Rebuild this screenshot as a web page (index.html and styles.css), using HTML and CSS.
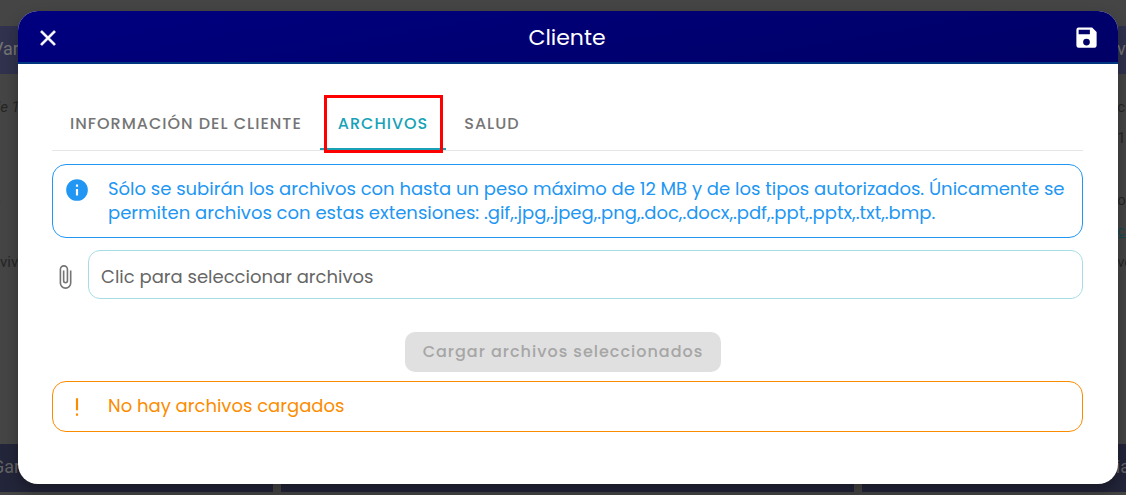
FILE: index.html
```
<!DOCTYPE html>
<html lang="es">
<head>
    <meta charset="UTF-8">
    <meta name="viewport" content="width=device-width, initial-scale=1.0">
    <title>Cliente</title>
    <link rel="stylesheet" href="styles.css">
</head>
<body>
    <div class="board">
        <div class="board-row board-row-top">
            <span class="cell">Var</span>
            <span class="cell"></span>
            <span class="cell cell-end">vi</span>
        </div>
        <div class="board-content">
            <div class="board-notes">
                <p><em>de 1</em></p>
                <p></p>
                <p></p>
                <p>o</p>
                <p></p>
                <p class="indent">viv</p>
            </div>
            <div class="board-notes">
                <p>ci</p>
                <p>16</p>
                <p></p>
                <p>or</p>
                <p><a href="#">cl</a></p>
                <p>vo</p>
            </div>
        </div>
        <div class="board-row">
            <span class="cell">Gar</span>
            <span class="cell"></span>
            <span class="cell cell-end">ia</span>
        </div>
    </div>

    <div class="overlay">
        <div class="dialog" role="dialog" aria-labelledby="dialog-title">
            <div class="dialog-header">
                <button type="button" class="icon-button" aria-label="Cerrar">
                    <svg class="icon-close" viewBox="0 0 24 24" width="26" height="26"><path d="M19 6.41L17.59 5 12 10.59 6.41 5 5 6.41 10.59 12 5 17.59 6.41 19 12 13.41 17.59 19 19 17.59 13.41 12z"/></svg>
                </button>
                <h1 id="dialog-title">Cliente</h1>
                <button type="button" class="icon-button" aria-label="Guardar">
                    <svg viewBox="0 0 24 24" width="27" height="27"><path d="M15 9H5V5h10m-3 14a3 3 0 0 1-3-3 3 3 0 0 1 3-3 3 3 0 0 1 3 3 3 3 0 0 1-3 3m5-16H5a2 2 0 0 0-2 2v14a2 2 0 0 0 2 2h14a2 2 0 0 0 2-2V7z"/></svg>
                </button>
            </div>
            <div class="dialog-body">
                <div class="tabs" role="tablist">
                    <button type="button" class="tab" role="tab">INFORMACIÓN DEL CLIENTE</button>
                    <button type="button" class="tab tab-active" role="tab" aria-selected="true">ARCHIVOS<span class="marker"></span></button>
                    <button type="button" class="tab" role="tab">SALUD</button>
                </div>
                <div class="alert alert-info">
                    <svg viewBox="0 0 24 24" width="26" height="26"><path d="M13 9h-2V7h2m0 10h-2v-6h2m-1-9A10 10 0 0 0 2 12a10 10 0 0 0 10 10 10 10 0 0 0 10-10A10 10 0 0 0 12 2z"/></svg>
                    <p>Sólo se subirán los archivos con hasta un peso máximo de 12 MB y de los tipos autorizados. Únicamente se permiten archivos con estas extensiones: .gif,.jpg,.jpeg,.png,.doc,.docx,.pdf,.ppt,.pptx,.txt,.bmp.</p>
                </div>
                <div class="file-row">
                    <svg viewBox="0 0 24 24" width="26" height="26"><path d="M16.5 6v11.5a4 4 0 0 1-4 4 4 4 0 0 1-4-4V5A2.5 2.5 0 0 1 11 2.5 2.5 2.5 0 0 1 13.5 5v10.5a1 1 0 0 1-1 1 1 1 0 0 1-1-1V6H10v9.5a2.5 2.5 0 0 0 2.5 2.5 2.5 2.5 0 0 0 2.5-2.5V5a4 4 0 0 0-4-4 4 4 0 0 0-4 4v12.5a5.5 5.5 0 0 0 5.5 5.5 5.5 5.5 0 0 0 5.5-5.5V6z"/></svg>
                    <input type="text" class="file-input" placeholder="Clic para seleccionar archivos" aria-label="Clic para seleccionar archivos" readonly>
                </div>
                <button type="button" class="upload-button" disabled>Cargar archivos seleccionados</button>
                <div class="alert alert-warning">
                    <svg viewBox="0 0 24 24" width="26" height="26"><path d="M11 4h2v11h-2zM11 18h2v2h-2z"/></svg>
                    <p>No hay archivos cargados</p>
                </div>
            </div>
        </div>
    </div>
</body>
</html>
```
FILE: styles.css
```
* {
    box-sizing: border-box;
}
body {
    margin: 0;
    min-height: 100vh;
    overflow: hidden;
    background-color: #454545;
    font-family: Poppins, Inter, "Open Sans", sans-serif;
    color: #666;
}
h1, p {
    margin: 0;
    font-weight: 400;
}
button, input {
    font-family: inherit;
}
svg {
    display: block;
    flex: none;
    fill: currentColor;
}

/* page behind the dialog */
.board {
    position: absolute;
    inset: 0 -8px;
    display: flex;
    flex-direction: column;
    padding: 26px 0 3px;
    font-family: Roboto, sans-serif;
    font-size: 15px;
    color: #262626;
}
.board-row {
    display: grid;
    grid-template-columns: 281px 1fr 272px;
    gap: 8px;
}
.cell {
    height: 48px;
    line-height: 46px;
    background-color: #23253a;
    color: #636363;
    font-size: 18px;
}
.board-row-top .cell {
    background-color: #30324e;
    color: #747474;
}
.cell-end {
    padding-right: 4px;
    text-align: right;
}
.board-content {
    flex: 1;
    display: flex;
    justify-content: space-between;
    padding-top: 18px;
}
.board-notes p {
    height: 31px;
    line-height: 31px;
}
.board-notes .indent {
    padding-left: 8px;
}
.board-notes a {
    color: #164a52;
}

/* dialog */
.overlay {
    position: relative;
    padding: 11px 8px 11px 18px;
}
.dialog {
    border-radius: 20px;
    overflow: hidden;
    background-color: #fff;
    box-shadow: 0 8px 16px rgba(0, 0, 0, 0.3);
}
.dialog-header {
    display: flex;
    align-items: center;
    justify-content: space-between;
    height: 53px;
    padding: 2px 18px 0 17px;
    background: linear-gradient(170deg, #000080, #000066);
    border-bottom: 2px solid #003580;
    color: #fff;
}
.dialog-header h1 {
    font-size: 22px;
    line-height: 32px;
}
.icon-button {
    display: flex;
    padding: 0;
    border: 0;
    background: none;
    color: inherit;
    cursor: pointer;
}
.icon-close path {
    stroke: currentColor;
    stroke-width: 0.5;
}
.dialog-body {
    display: flex;
    flex-direction: column;
    padding: 32px 35px 52px 34px;
}
.tabs {
    display: flex;
    height: 55px;
    margin-bottom: 13px;
    border-bottom: 1px solid #e6e6e6;
}
.tab {
    position: relative;
    padding: 2px 18px 0;
    border: 0;
    border-bottom: 2px solid transparent;
    background: none;
    color: #757575;
    font-size: 16px;
    font-weight: 500;
    letter-spacing: 1px;
    cursor: pointer;
}
.tab-active {
    border-bottom-color: #17a2b8;
    color: #17a2b8;
}
.marker {
    position: absolute;
    inset: -1px 3px -5px 4px;
    border: 3px solid #f00;
}
.alert {
    display: flex;
    gap: 18px;
    padding: 12px 12px 11px 11px;
    border: 1px solid currentColor;
    border-radius: 14px;
    font-size: 18px;
    line-height: 24px;
}
.alert-info {
    padding-bottom: 12px;
    color: #2196f3;
}
.alert-warning {
    color: #fb8c00;
}
.file-row {
    display: flex;
    align-items: center;
    gap: 10px;
    margin: 12px 0 33px;
    color: #757575;
}
.file-row svg {
    margin-top: 4px;
}
.file-input {
    flex: 1;
    height: 49px;
    padding: 4px 12px 0;
    border: 1px solid #a8dce4;
    border-radius: 12px;
    font-size: 18px;
}
.file-input::placeholder {
    color: #666;
}
.upload-button {
    align-self: center;
    height: 40px;
    margin: 0 9px 9px 0;
    padding: 0 18px 2px;
    border: 0;
    border-radius: 10px;
    background-color: #e0e0e0;
    color: #a6a6a6;
    font-size: 16px;
    font-weight: 500;
    letter-spacing: 1px;
}
```
